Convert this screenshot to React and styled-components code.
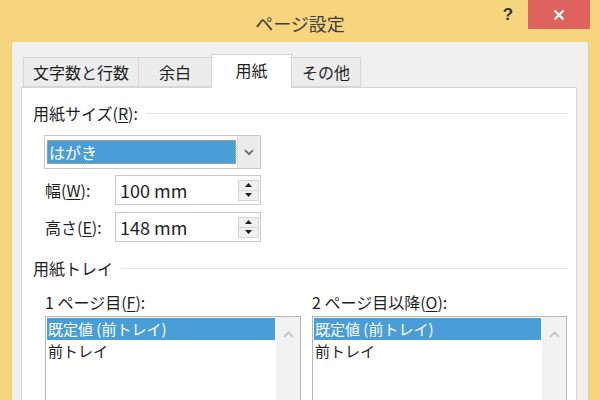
import React from "react";
import styled, { createGlobalStyle } from "styled-components";

const Global = createGlobalStyle`
  html, body { margin: 0; padding: 0; background: #f7d57e; }
  body { font-family: "Noto Sans CJK JP", "Noto Sans", sans-serif; color: #1e1e1e; }
`;

const Window = styled.div`
  width: 600px;
  height: 400px;
  overflow: hidden;
  background: #f7d57e;
  display: flex;
  flex-direction: column;
`;

const TitleBar = styled.div`
  height: 42px;
  flex: none;
  display: grid;
  grid-template-columns: 1fr auto 1fr;
  align-items: start;
`;

const Title = styled.div`
  grid-column: 2;
  font-size: 18px;
  line-height: 22px;
  padding-top: 12px;
  color: #3d3d3d;
`;

const Controls = styled.div`
  grid-column: 3;
  justify-self: end;
  display: flex;
  margin-right: 10px;
`;

const HelpButton = styled.div`
  width: 40px;
  height: 29px;
  display: flex;
  align-items: center;
  justify-content: center;
  font-family: "Liberation Sans", sans-serif;
  font-weight: bold;
  font-size: 17px;
  color: #333;
`;

const CloseButton = styled.div`
  width: 62px;
  height: 29px;
  background: #e0625f;
  display: flex;
  align-items: center;
  justify-content: center;
`;

const Dialog = styled.div`
  flex: 1;
  margin: 0 11px;
  background: #f0f0f0;
  border-left: 1px solid #e4cf98;
  border-right: 1px solid #e4cf98;
  padding: 12px 11px 0 9px;
  display: flex;
  flex-direction: column;
`;

const TabRow = styled.div`
  height: 33px;
  display: flex;
  align-items: flex-end;
  padding-left: 2px;
  position: relative;
  z-index: 1;
`;

const Tab = styled.div`
  width: ${(p) => p.$w}px;
  height: ${(p) => (p.$active ? 34 : 30)}px;
  margin-bottom: ${(p) => (p.$active ? -1 : 0)}px;
  margin-left: -1px;
  box-sizing: border-box;
  border: 1px solid #d6d6d6;
  border-bottom: ${(p) => (p.$active ? "none" : "1px solid #d6d6d6")};
  background: ${(p) => (p.$active ? "#ffffff" : "#ececec")};
  display: flex;
  align-items: center;
  justify-content: center;
  font-size: 16px;
  padding-bottom: ${(p) => (p.$active ? 4 : 0)}px;
  &:first-child { margin-left: 0; }
`;

const Pane = styled.div`
  flex: 1;
  background: #ffffff;
  border: 1px solid #d6d6d6;
  padding: 14px 8px 0 11px;
`;

const SectionHeader = styled.div`
  height: 22px;
  display: flex;
  align-items: center;
  gap: 8px;
  font-size: 16px;
  margin-top: ${(p) => p.$mt || 0}px;
`;

const Rule = styled.div`
  flex: 1;
  height: 1px;
  background: #e3e3e3;
`;

const U = styled.span`
  text-decoration: underline;
  text-underline-offset: 2px;
`;

const Indent = styled.div`
  padding-left: ${(p) => p.$pl}px;
  margin-top: ${(p) => p.$mt}px;
`;

const Combo = styled.div`
  width: 217px;
  height: 34px;
  box-sizing: border-box;
  border: 1px solid #c9c9c9;
  display: flex;
  background: #ffffff;
`;

const ComboField = styled.div`
  flex: 1;
  margin: 4px 1px 4px 2px;
  background: #4a9ed8;
  outline: 1px dotted #e0a24a;
  outline-offset: -1px;
  color: #ffffff;
  font-size: 16px;
  line-height: 24px;
  padding-left: 2px;
`;

const ComboButton = styled.div`
  width: 22px;
  background: #ececec;
  border-left: 1px solid #d8d8d8;
  display: flex;
  align-items: center;
  justify-content: center;
`;

const FieldRow = styled.div`
  display: grid;
  grid-template-columns: 70px 146px;
  align-items: center;
  margin-top: ${(p) => p.$mt}px;
  font-size: 16px;
  padding-left: 1px;
`;

const NumberBox = styled.div`
  height: 30px;
  box-sizing: border-box;
  border: 1px solid #c9c9c9;
  display: flex;
  align-items: center;
  justify-content: space-between;
  padding: 0 1px 0 4px;
`;

const NumberValue = styled.span`
  font-size: 18px;
  line-height: 26px;
`;

const Spinner = styled.div`
  width: 21px;
  height: 21px;
  box-sizing: border-box;
  border: 1px solid #d6d6d6;
  display: flex;
  flex-direction: column;
  background: #f0f0f0;
`;

const SpinHalf = styled.div`
  flex: 1;
  display: flex;
  align-items: center;
  justify-content: center;
  & + & { border-top: 1px solid #d6d6d6; }
`;

const Trays = styled.div`
  display: grid;
  grid-template-columns: 256px 255px;
  column-gap: 11px;
  margin-top: 12px;
  padding-left: 12px;
`;

const TrayColumn = styled.div`
  display: flex;
  flex-direction: column;
`;

const TrayLabel = styled.div`
  font-size: 16px;
  line-height: 22px;
  margin-bottom: 3px;
`;

const ListBox = styled.div`
  height: 110px;
  box-sizing: border-box;
  border: 1px solid #b3b6bd;
  display: flex;
`;

const Items = styled.div`
  flex: 1;
  padding: 1px;
`;

const Item = styled.div`
  height: 22px;
  line-height: 22px;
  font-size: 15px;
  padding-left: 1px;
  background: ${(p) => (p.$selected ? "#4a9ed8" : "transparent")};
  color: ${(p) => (p.$selected ? "#ffffff" : "#1e1e1e")};
`;

const ScrollBar = styled.div`
  width: 24px;
  background: #f2f2f2;
  display: flex;
  flex-direction: column;
  align-items: center;
`;

const ScrollUp = styled.div`
  height: 30px;
  margin-top: 2px;
  display: flex;
  align-items: center;
  justify-content: center;
`;

const ChevronDown = () => (
  <svg width="10" height="7" viewBox="0 0 10 7">
    <path d="M1 1.2 L5 5.2 L9 1.2" fill="none" stroke="#6e6e6e" strokeWidth="1.8" />
  </svg>
);

const ChevronUp = () => (
  <svg width="11" height="7" viewBox="0 0 11 7">
    <path d="M1 6 L5.5 1.5 L10 6" fill="none" stroke="#c6c6c6" strokeWidth="2" />
  </svg>
);

const TriUp = () => (
  <svg width="7" height="4" viewBox="0 0 7 4">
    <path d="M0 4 L3.5 0 L7 4 Z" fill="#1e1e1e" />
  </svg>
);

const TriDown = () => (
  <svg width="7" height="4" viewBox="0 0 7 4">
    <path d="M0 0 L7 0 L3.5 4 Z" fill="#1e1e1e" />
  </svg>
);

const CloseX = () => (
  <svg width="12" height="12" viewBox="0 0 12 12">
    <path d="M1.5 1.5 L10.5 10.5 M10.5 1.5 L1.5 10.5" stroke="#ffffff" strokeWidth="2.2" />
  </svg>
);

const tabs = [
  { label: "文字数と行数", w: 116 },
  { label: "余白", w: 74 },
  { label: "用紙", w: 81, active: true },
  { label: "その他", w: 70 },
];

const NumberField = ({ value }) => (
  <NumberBox>
    <NumberValue>{value}</NumberValue>
    <Spinner>
      <SpinHalf><TriUp /></SpinHalf>
      <SpinHalf><TriDown /></SpinHalf>
    </Spinner>
  </NumberBox>
);

const TrayList = ({ label }) => (
  <TrayColumn>
    <TrayLabel>{label}</TrayLabel>
    <ListBox>
      <Items>
        <Item $selected>既定値 (前トレイ)</Item>
        <Item>前トレイ</Item>
      </Items>
      <ScrollBar>
        <ScrollUp><ChevronUp /></ScrollUp>
      </ScrollBar>
    </ListBox>
  </TrayColumn>
);

export default function App() {
  return (
    <Window>
      <Global />
      <TitleBar>
        <Title>ページ設定</Title>
        <Controls>
          <HelpButton>?</HelpButton>
          <CloseButton><CloseX /></CloseButton>
        </Controls>
      </TitleBar>
      <Dialog>
        <TabRow>
          {tabs.map((t) => (
            <Tab key={t.label} $w={t.w} $active={t.active}>{t.label}</Tab>
          ))}
        </TabRow>
        <Pane>
          <SectionHeader>
            <span>用紙サイズ(<U>R</U>):</span>
            <Rule />
          </SectionHeader>
          <Indent $pl={11} $mt={11}>
            <Combo>
              <ComboField>はがき</ComboField>
              <ComboButton><ChevronDown /></ComboButton>
            </Combo>
            <FieldRow $mt={6}>
              <span>幅(<U>W</U>):</span>
              <NumberField value="100 mm" />
            </FieldRow>
            <FieldRow $mt={7}>
              <span>高さ(<U>E</U>):</span>
              <NumberField value="148 mm" />
            </FieldRow>
          </Indent>
          <SectionHeader $mt={15}>
            <span>用紙トレイ</span>
            <Rule />
          </SectionHeader>
          <Trays>
            <TrayList label={<>1 ページ目(<U>F</U>):</>} />
            <TrayList label={<>2 ページ目以降(<U>O</U>):</>} />
          </Trays>
        </Pane>
      </Dialog>
    </Window>
  );
}
